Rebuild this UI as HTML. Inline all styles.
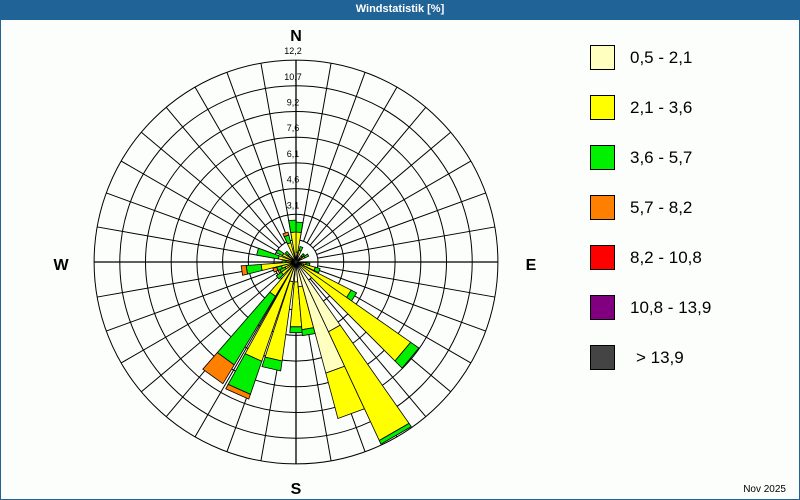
<!DOCTYPE html>
<html><head><meta charset="utf-8">
<style>
html,body{margin:0;padding:0;}
body{width:800px;height:500px;background:#fcfefc;font-family:"Liberation Sans",sans-serif;position:relative;overflow:hidden;}
.frame{position:absolute;left:0;top:0;width:798px;height:498px;border:1px solid #1f6397;}
.title{position:absolute;left:0;top:0;width:800px;height:20px;background:#1f6397;color:#fff;font-size:11px;font-weight:bold;text-align:center;line-height:19px;}
.leg{position:absolute;left:590px;width:23px;height:23px;border:1px solid #000;}
.lt{position:absolute;left:630px;font-size:17px;color:#000;}
.date{position:absolute;right:14px;top:484px;font-size:10px;color:#000;}
svg{position:absolute;left:0;top:0;}
</style></head><body>
<div class="frame"></div>
<svg id="s" width="800" height="500" xmlns="http://www.w3.org/2000/svg"></svg>
<div class="title">Windstatistik [%]</div>
<div class="leg" style="top:45px;background:#ffffc0"></div><div class="lt" style="top:48px">0,5 - 2,1</div>
<div class="leg" style="top:95px;background:#ffff00"></div><div class="lt" style="top:98px">2,1 - 3,6</div>
<div class="leg" style="top:145px;background:#00f000"></div><div class="lt" style="top:148px">3,6 - 5,7</div>
<div class="leg" style="top:195px;background:#ff8000"></div><div class="lt" style="top:198px">5,7 - 8,2</div>
<div class="leg" style="top:245px;background:#ff0000"></div><div class="lt" style="top:248px">8,2 - 10,8</div>
<div class="leg" style="top:295px;background:#800080"></div><div class="lt" style="top:298px">10,8 - 13,9</div>
<div class="leg" style="top:345px;background:#444444"></div><div class="lt" style="top:348px;left:636px">&gt; 13,9</div>
<div class="date">Nov 2025</div>
<script>
var s=document.getElementById('s'),cx=296,cy=262,R0=22,step=25.7,NS='http://www.w3.org/2000/svg';
function el(n,a,t){var e=document.createElementNS(NS,n);for(var k in a)e.setAttribute(k,a[k]);if(t)e.textContent=t;s.appendChild(e);return e;}
var Rmax=R0+7*step;
for(var d=0;d<360;d+=10){var a=d*Math.PI/180;el('line',{x1:cx+R0*Math.sin(a),y1:cy-R0*Math.cos(a),x2:cx+Rmax*Math.sin(a),y2:cy-Rmax*Math.cos(a),stroke:'#000','stroke-width':1});}
for(var i=0;i<=7;i++)el('circle',{cx:cx,cy:cy,r:R0+i*step,fill:'none',stroke:'#000','stroke-width':1});
el('line',{x1:cx-Rmax,y1:cy,x2:cx+Rmax,y2:cy,stroke:'#000','stroke-width':1.3});
el('line',{x1:cx,y1:cy-Rmax,x2:cx,y2:cy+Rmax,stroke:'#000','stroke-width':1.3});
var C=['#ffffc0','#ffff00','#00f000','#ff8000','#ff0000','#800080','#444444'];
function wedge(dir,r1,r2,col,w){w=w||10;var a1=(dir-w/2)*Math.PI/180,a2=(dir+w/2)*Math.PI/180;
 var p=function(r,a){return (cx+r*Math.sin(a)).toFixed(1)+','+(cy-r*Math.cos(a)).toFixed(1);};
 el('path',{d:'M'+p(r1,a1)+'L'+p(r2,a1)+'L'+p(r2,a2)+'L'+p(r1,a2)+'Z',fill:col,stroke:'#000','stroke-width':0.8});}
var bars=[
[150,[77,197,201]],[160,[115,162]],[130,[0,140,150]],[122,[0,62,68]],
[180,[20,65,71]],[170,[25,68,74]],[193,[20,100,110]],
[204,[0,105,140,145]],[216,[0,40,120,142]],
[261,[0,35,50,55]],[285,[0,18,40]],[250,[0,15,20,24]],
[355,[5,30,42]],[5,[10,30,40]],[340,[0,20,28,31]],[300,[0,15,22]],
[230,[0,18,24]],[240,[0,12,18,20]],[100,[0,10,14]],[110,[8,20,25]],
[60,[0,10,14]],[20,[0,12,16]],[45,[0,8,11]],[270,[0,10,14]],[315,[0,10,14]]
];
bars.sort(function(a,b){return a[1][a[1].length-1]-b[1][b[1].length-1];});
bars.forEach(function(b){var prev=2;for(var i=0;i<b[1].length;i++){var r=b[1][i];if(r>prev){wedge(b[0],prev,r,C[i]);prev=r;}}});
var labs=['3,1','4,6','6,1','7,6','9,2','10,7','12,2'];
for(var i=0;i<7;i++)el('text',{x:cx-3,y:cy-R0-(i+1)*step-6,'font-size':9,'text-anchor':'middle','font-family':'Liberation Sans, sans-serif',fill:'#000'},labs[i]);
var f={'font-size':16,'font-weight':'bold','text-anchor':'middle','font-family':'Liberation Sans, sans-serif'};
function T(x,y,t){var a=Object.assign({x:x,y:y},f);el('text',a,t);}
T(296,41,'N');T(296,494,'S');T(61,270,'W');T(531,270,'E');
</script>
</body></html>
